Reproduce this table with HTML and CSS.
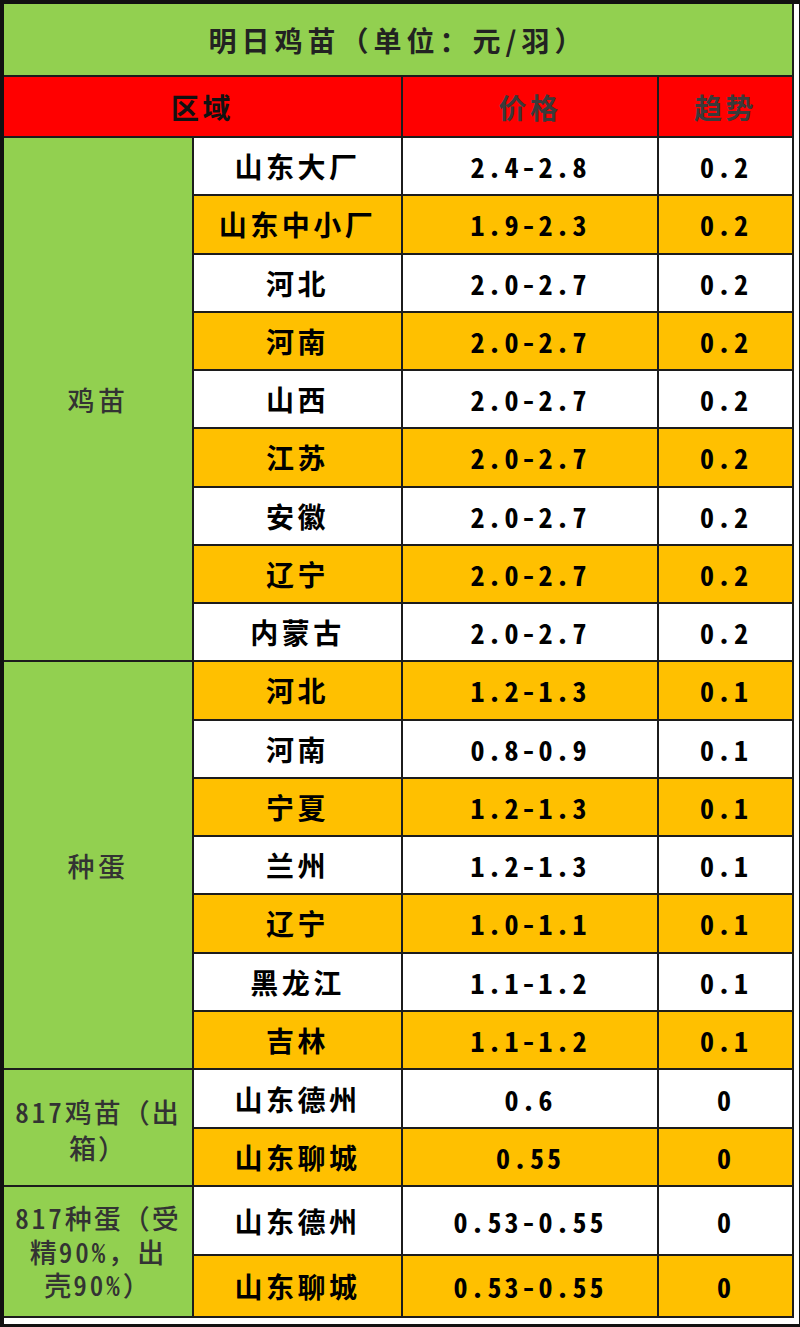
FILE: index.html
```html
<!DOCTYPE html>
<html lang="zh-CN">
<head>
<meta charset="utf-8">
<title>明日鸡苗</title>
<link rel="stylesheet" href="styles.css">
</head>
<body>
<div class="frame">
  <div class="sheet">
    <div class="cell title">明日鸡苗（单位：元/羽）</div>

    <div class="cell head head-area">区域</div>
    <div class="cell head head-grey">价格</div>
    <div class="cell head head-grey">趋势</div>

    <div class="cell group g1">鸡苗</div>
    <div class="cell w">山东大厂</div><div class="cell w num">2.4-2.8</div><div class="cell w num">0.2</div>
    <div class="cell o">山东中小厂</div><div class="cell o num">1.9-2.3</div><div class="cell o num">0.2</div>
    <div class="cell w">河北</div><div class="cell w num">2.0-2.7</div><div class="cell w num">0.2</div>
    <div class="cell o">河南</div><div class="cell o num">2.0-2.7</div><div class="cell o num">0.2</div>
    <div class="cell w">山西</div><div class="cell w num">2.0-2.7</div><div class="cell w num">0.2</div>
    <div class="cell o">江苏</div><div class="cell o num">2.0-2.7</div><div class="cell o num">0.2</div>
    <div class="cell w">安徽</div><div class="cell w num">2.0-2.7</div><div class="cell w num">0.2</div>
    <div class="cell o">辽宁</div><div class="cell o num">2.0-2.7</div><div class="cell o num">0.2</div>
    <div class="cell w">内蒙古</div><div class="cell w num">2.0-2.7</div><div class="cell w num">0.2</div>

    <div class="cell group g2">种蛋</div>
    <div class="cell o">河北</div><div class="cell o num">1.2-1.3</div><div class="cell o num">0.1</div>
    <div class="cell w">河南</div><div class="cell w num">0.8-0.9</div><div class="cell w num">0.1</div>
    <div class="cell o">宁夏</div><div class="cell o num">1.2-1.3</div><div class="cell o num">0.1</div>
    <div class="cell w">兰州</div><div class="cell w num">1.2-1.3</div><div class="cell w num">0.1</div>
    <div class="cell o">辽宁</div><div class="cell o num">1.0-1.1</div><div class="cell o num">0.1</div>
    <div class="cell w">黑龙江</div><div class="cell w num">1.1-1.2</div><div class="cell w num">0.1</div>
    <div class="cell o">吉林</div><div class="cell o num">1.1-1.2</div><div class="cell o num">0.1</div>

    <div class="cell group g3 lines-a"><span class="hw">817</span>鸡苗（出<br>箱）</div>
    <div class="cell w">山东德州</div><div class="cell w num">0.6</div><div class="cell w num">0</div>
    <div class="cell o">山东聊城</div><div class="cell o num">0.55</div><div class="cell o num">0</div>

    <div class="cell group g4 lines-b"><span class="hw">817</span>种蛋（受<br>精<span class="hw">90%</span>，出<br>壳<span class="hw">90%</span>）</div>
    <div class="cell w">山东德州</div><div class="cell w num">0.53-0.55</div><div class="cell w num">0</div>
    <div class="cell o">山东聊城</div><div class="cell o num">0.53-0.55</div><div class="cell o num">0</div>
  </div>
</div>
</body>
</html>
```

FILE: styles.css
```css
html, body {
  margin: 0;
  padding: 0;
  background: #111;
}

body {
  width: 800px;
  height: 1327px;
  overflow: hidden;
  font-family: "Noto Sans CJK SC", "Noto Sans", sans-serif;
}

.frame {
  margin: 4px 1px 3px 4px;
  height: 1320px;
  background: #fff;
}

.sheet {
  display: grid;
  grid-template-columns: 188px 207px 254px 133px;
  grid-template-rows:
    71px 59px
    repeat(16, 56.25px)
    57px 56px 67px 60px;
  gap: 2px;
  background: #1c1c1c;
  border-right: 2px solid #1c1c1c;
  border-bottom: 2px solid #1c1c1c;
  width: 788px;
}

.cell {
  display: flex;
  align-items: center;
  justify-content: center;
  text-align: center;
  font-size: 28px;
  font-weight: 700;
  letter-spacing: 3.5px;
  color: #000;
}

.title {
  grid-column: 1 / 5;
  background: #92d050;
  color: #222;
  letter-spacing: 5px;
}

.head {
  background: #ff0000;
}

.head-area {
  grid-column: 1 / 3;
  color: #111;
}

.head-grey {
  color: #3a3a3a;
}

.group {
  display: block;
  align-self: stretch;
  background: #92d050;
  color: #333;
  font-weight: 500;
  font-size: 27px;
}

.g1, .g2 {
  display: flex;
}

.g1 { grid-row: 3 / 12; grid-column: 1; }
.g2 { grid-row: 12 / 19; grid-column: 1; }
.g3 { grid-row: 19 / 21; grid-column: 1; }
.g4 { grid-row: 21 / 23; grid-column: 1; }

.lines-a {
  line-height: 36px;
  letter-spacing: 2px;
  padding-top: 24px;
}

.lines-b {
  line-height: 33.5px;
  letter-spacing: 2px;
  padding-top: 14px;
}

.hw,
.num {
  font-feature-settings: "hwid" 1;
}

.hw {
  letter-spacing: 3px;
}

.num {
  letter-spacing: 3px;
}

.w { background: #fff; }
.o { background: #ffc000; }
```
